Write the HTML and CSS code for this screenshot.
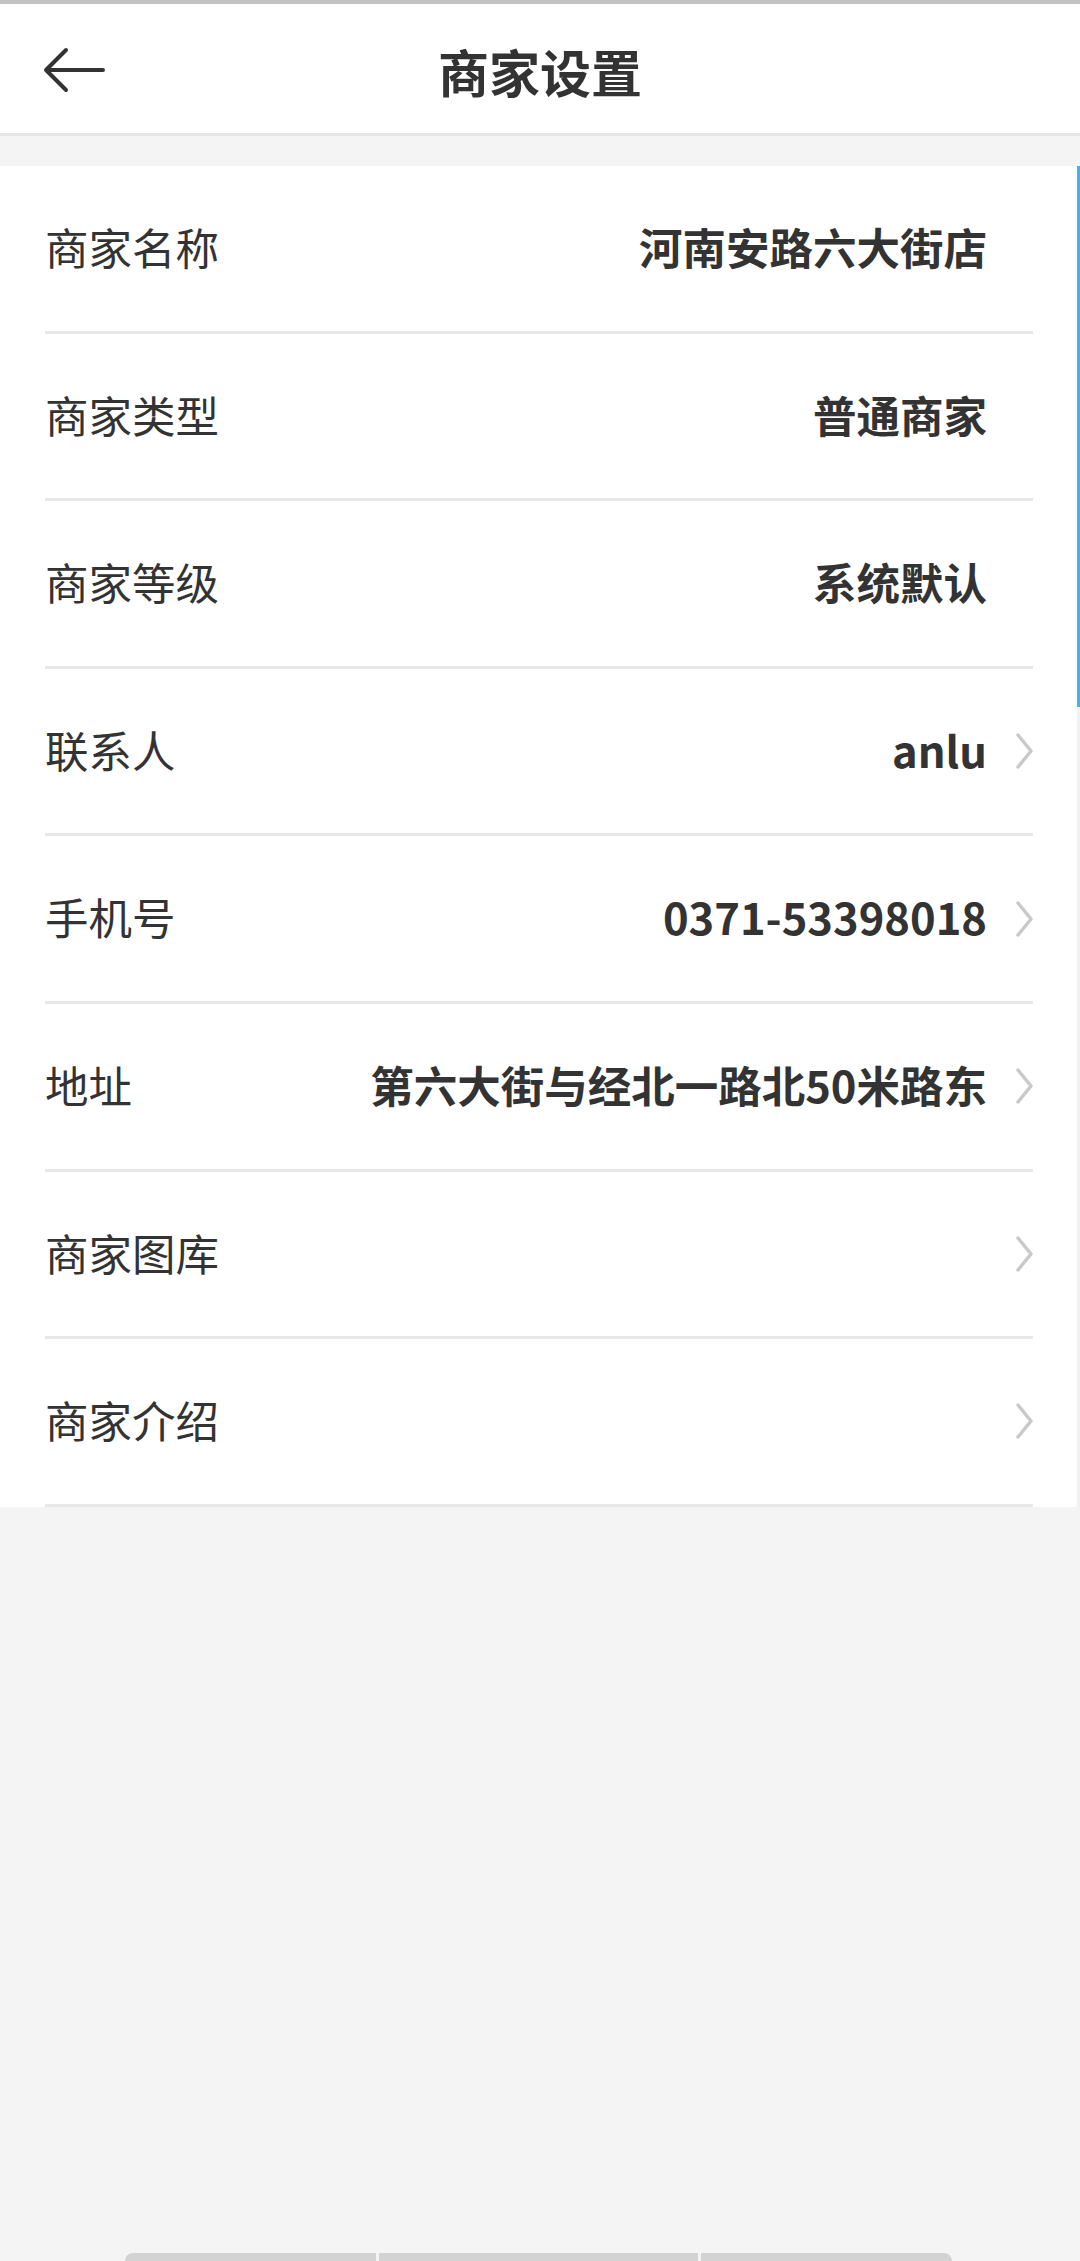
FILE: index.html
```html
<!DOCTYPE html>
<html lang="zh-CN">
<head>
<meta charset="utf-8">
<title>商家设置</title>
<link rel="stylesheet" href="styles.css">
</head>
<body>
<div class="page">
  <div class="status-strip"></div>
  <header class="header">
    <div class="header-left">
      <svg class="back" width="70" height="55" viewBox="0 0 70 55">
        <path d="M26 7 L6 27 L26 47 M6 27 L63 27" fill="none" stroke="#333" stroke-width="4" stroke-linecap="round" stroke-linejoin="round"/>
      </svg>
    </div>
    <h1 class="title">商家设置</h1>
    <div class="header-right"></div>
  </header>
  <div class="gap"></div>
  <section class="list">
    <div class="row"><span class="label">商家名称</span><span class="value">河南安路六大街店</span><span class="chev hidden"></span></div>
    <div class="row"><span class="label">商家类型</span><span class="value">普通商家</span><span class="chev hidden"></span></div>
    <div class="row"><span class="label">商家等级</span><span class="value">系统默认</span><span class="chev hidden"></span></div>
    <div class="row"><span class="label">联系人</span><span class="value">anlu</span><span class="chev"><svg width="17" height="36" viewBox="0 0 17 36"><path d="M2 2 L15 18 L2 34" fill="none" stroke="#c9c9c9" stroke-width="3.5" stroke-linecap="round" stroke-linejoin="round"/></svg></span></div>
    <div class="row"><span class="label">手机号</span><span class="value">0371-53398018</span><span class="chev"><svg width="17" height="36" viewBox="0 0 17 36"><path d="M2 2 L15 18 L2 34" fill="none" stroke="#c9c9c9" stroke-width="3.5" stroke-linecap="round" stroke-linejoin="round"/></svg></span></div>
    <div class="row"><span class="label">地址</span><span class="value">第六大街与经北一路北50米路东</span><span class="chev"><svg width="17" height="36" viewBox="0 0 17 36"><path d="M2 2 L15 18 L2 34" fill="none" stroke="#c9c9c9" stroke-width="3.5" stroke-linecap="round" stroke-linejoin="round"/></svg></span></div>
    <div class="row"><span class="label">商家图库</span><span class="value"></span><span class="chev"><svg width="17" height="36" viewBox="0 0 17 36"><path d="M2 2 L15 18 L2 34" fill="none" stroke="#c9c9c9" stroke-width="3.5" stroke-linecap="round" stroke-linejoin="round"/></svg></span></div>
    <div class="row"><span class="label">商家介绍</span><span class="value"></span><span class="chev"><svg width="17" height="36" viewBox="0 0 17 36"><path d="M2 2 L15 18 L2 34" fill="none" stroke="#c9c9c9" stroke-width="3.5" stroke-linecap="round" stroke-linejoin="round"/></svg></span></div>
    <div class="scroll-track"><div class="scroll-thumb"></div></div>
  </section>
  <div class="nav-indicator">
    <span class="seg seg-left"></span><span class="seg"></span><span class="seg seg-right"></span>
  </div>
</div>
</body>
</html>
```
FILE: styles.css
```css
html, body {
  margin: 0;
  padding: 0;
}
body {
  background: #f4f4f4;
  font-family: "Noto Sans CJK SC", "Noto Sans", sans-serif;
  color: #333;
}
.page {
  position: relative;
  width: 1080px;
  height: 2261px;
  overflow: hidden;
  background: #f4f4f4;
}
.status-strip {
  height: 4px;
  background: #c2c2c2;
}
.header {
  height: 129px;
  background: #fff;
  border-bottom: 3px solid #e6e6e6;
  display: grid;
  grid-template-columns: 1fr auto 1fr;
  align-items: center;
}
.header-left {
  padding-left: 40px;
  display: flex;
  align-items: center;
  padding-top: 4px;
}
.back {
  display: block;
}
.title {
  margin: 0;
  font-size: 51px;
  font-weight: 700;
  line-height: 1;
  padding-top: 6px;
  color: #333;
}
.gap {
  height: 30px;
}
.list {
  position: relative;
  background: #fff;
  padding: 0 47px 0 45px;
}
.row {
  height: 167.6px;
  box-sizing: border-box;
  border-bottom: 3px solid #e8e8e8;
  display: flex;
  align-items: center;
  font-size: 43.5px;
  line-height: 1;
}
.label {
  flex: 1;
  font-weight: 400;
  padding-bottom: 3px;
}
.value {
  font-weight: 700;
  padding-bottom: 3px;
  margin-right: -2px;
}
.chev {
  width: 17px;
  height: 36px;
  margin-left: 31px;
  display: flex;
}
.chev.hidden {
  visibility: hidden;
}
.scroll-track {
  position: absolute;
  top: 0;
  right: 0;
  width: 3px;
  height: 100%;
  background: #f1f1f1;
}
.scroll-thumb {
  height: 541px;
  background: #3fb2f4;
}
.nav-indicator {
  position: absolute;
  left: 125px;
  bottom: -8px;
  width: 827px;
  height: 16px;
  display: flex;
  gap: 3px;
}
.seg {
  flex: 1;
  background: #d3d3d3;
}
.seg-left {
  flex: 0 0 251px;
  border-radius: 8px 0 0 8px;
}
.seg-right {
  flex: 0 0 251px;
  border-radius: 0 8px 8px 0;
}
```
